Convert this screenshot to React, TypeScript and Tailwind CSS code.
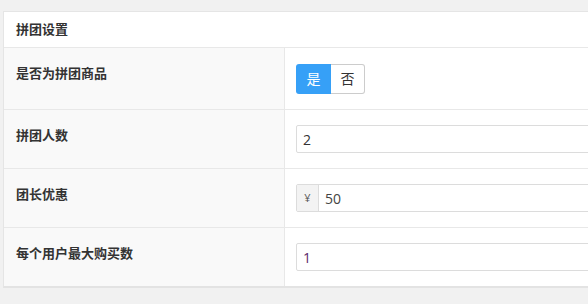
import React from "react";

// Group-buying settings panel

const font = { fontFamily: '"Open Sans", "Noto Sans CJK SC", sans-serif' };

const Row: React.FC<{ label: string; children: React.ReactNode; tall?: boolean }> = ({
  label,
  children,
  tall,
}) => (
  <div className="flex border-t border-[#e8e8e8]">
    <div className="w-[281px] shrink-0 bg-[#f9f9f9] border-r border-[#e8e8e8] pl-[12px] pt-[17px]">
      <div className="text-[13px] leading-[16px] font-bold text-[#333]">{label}</div>
    </div>
    <div className={`flex-1 flex items-center pl-[11px] ${tall ? "h-[61px]" : "h-[58px]"}`}>
      {children}
    </div>
  </div>
);

export default function App() {
  return (
    <div className="w-[588px] h-[304px] overflow-hidden bg-[#f1f1f1]" style={font}>
      <div className="ml-[3px] mt-[11px] w-[640px] bg-white border border-[#e5e5e5] border-b-2 border-b-[#e3e3e3]">
        <div className="h-[35px] flex items-center pl-[12px] text-[13px] font-bold text-[#333]">
          拼团设置
        </div>

        <Row label="是否为拼团商品" tall>
          <div className="flex h-[30px] text-[14px]">
            <button className="w-[35px] h-full bg-[#36a0f7] text-white rounded-l-[3px]">是</button>
            <button className="w-[34px] h-full bg-white text-[#333] border border-l-0 border-[#ccc] rounded-r-[3px]">
              否
            </button>
          </div>
        </Row>

        <Row label="拼团人数">
          <div className="w-[320px] h-[28px] border border-[#dcdcdc] rounded-[2px] flex items-center pl-[6px] text-[14px] text-[#333]">
            2
          </div>
        </Row>

        <Row label="团长优惠">
          <div className="w-[320px] h-[28px] border border-[#dcdcdc] rounded-[2px] flex">
            <div className="w-[22px] bg-[#f3f3f3] border-r border-[#dcdcdc] flex items-center justify-center text-[11px] text-[#555]">
              ¥
            </div>
            <div className="flex items-center pl-[6px] text-[14px] text-[#444]">50</div>
          </div>
        </Row>

        <Row label="每个用户最大购买数">
          <div className="w-[320px] h-[28px] border border-[#dcdcdc] rounded-[2px] flex items-center pl-[6px] text-[14px] text-[#5b2a6b]">
            1
          </div>
        </Row>
      </div>
    </div>
  );
}
